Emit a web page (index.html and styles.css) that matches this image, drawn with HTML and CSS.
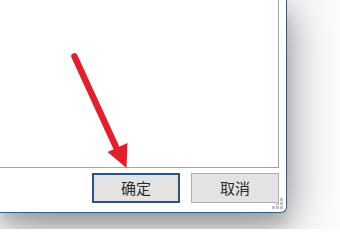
FILE: index.html
```html
<!DOCTYPE html>
<html lang="zh-CN">
<head>
<meta charset="utf-8">
<link rel="stylesheet" href="styles.css">
</head>
<body>
<div class="screen">
  <div class="window">
    <div class="panel"></div>
    <div class="actions">
      <button class="btn btn-default">确定</button>
      <button class="btn">取消</button>
    </div>
    <div class="grip">
      <span class="dot d1"></span>
      <span class="dot d2"></span><span class="dot d3"></span>
      <span class="dot d4"></span><span class="dot d5"></span><span class="dot d6"></span>
    </div>
  </div>
  <svg class="arrow" width="340" height="229" viewBox="0 0 340 229">
    <line x1="74.5" y1="56.5" x2="116" y2="147" stroke="#e51f29" stroke-width="6.5" stroke-linecap="round"/>
    <polygon points="107.5,152 127.5,143 126.5,168" fill="#e51f29"/>
  </svg>
</div>
</body>
</html>
```
FILE: styles.css
```css
html, body {
  margin: 0;
  padding: 0;
  background: #ffffff;
}
.screen {
  position: relative;
  width: 340px;
  height: 229px;
  overflow: hidden;
  background: #fbfbfb;
}
.window {
  position: relative;
  width: 279px;
  height: 212px;
  padding-right: 7px;
  background: #ffffff;
  border-right: 1px solid #2f5e8c;
  border-bottom: 1px solid #2f5e8c;
  border-bottom-right-radius: 6px;
  box-shadow: 4px 10px 40px 2px rgba(0, 0, 0, 0.36), 0 14px 14px rgba(0, 0, 0, 0.12);
  display: flex;
  flex-direction: column;
}
.panel {
  height: 167px;
  border-right: 1px solid #a3a3a3;
  border-bottom: 1px solid #a3a3a3;
  background: #ffffff;
}
.actions {
  display: flex;
  justify-content: flex-end;
  gap: 11px;
  padding-top: 5px;
}
.btn {
  box-sizing: border-box;
  width: 88px;
  height: 30px;
  margin: 0;
  padding: 0;
  background: #e3e3e3;
  border: 1px solid #adadad;
  border-radius: 0;
  font-family: "Noto Sans CJK SC", "Noto Sans", sans-serif;
  font-size: 15px;
  font-weight: 400;
  line-height: 26px;
  color: #2a2a2a;
}
.btn-default {
  border: 2px solid #2c5282;
}
.grip {
  position: absolute;
  right: 3px;
  bottom: 3px;
  width: 11px;
  height: 11px;
}
.dot {
  position: absolute;
  width: 3px;
  height: 3px;
  background: #c2c2c2;
}
.d1 { left: 8px; top: 0; }
.d2 { left: 4px; top: 4px; }
.d3 { left: 8px; top: 4px; }
.d4 { left: 0; top: 8px; }
.d5 { left: 4px; top: 8px; }
.d6 { left: 8px; top: 8px; }
.arrow {
  position: absolute;
  left: 0;
  top: 0;
}
```
